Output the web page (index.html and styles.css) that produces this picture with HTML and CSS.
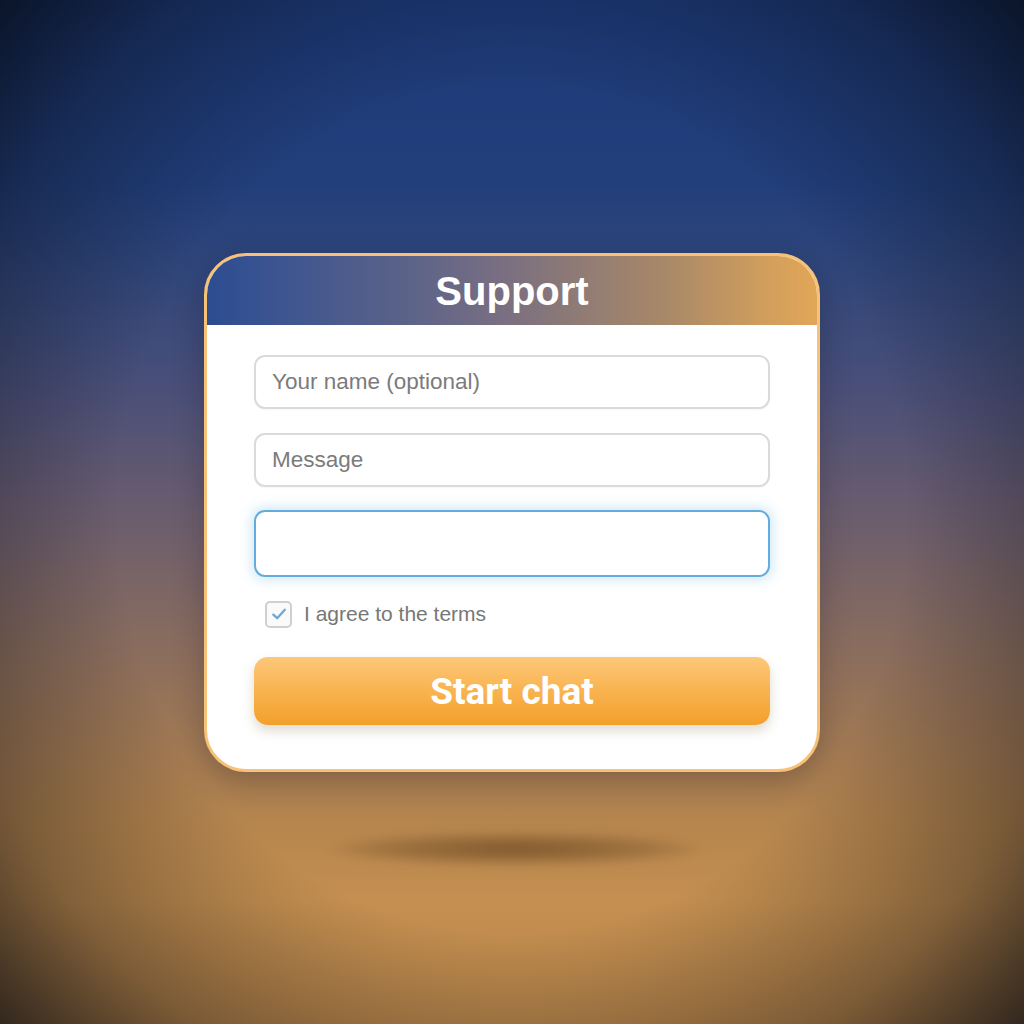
FILE: index.html
```html
<!DOCTYPE html>
<html lang="en">
<head>
<meta charset="utf-8">
<title>Support</title>
<link rel="stylesheet" href="styles.css">
</head>
<body>
<div class="scene">
  <div class="vignette"></div>
  <div class="floor-shadow"></div>
  <div class="card">
    <div class="card-header">
      <h1 class="title">Support</h1>
    </div>
    <form class="card-body">
      <input class="field" type="text" placeholder="Your name (optional)">
      <input class="field" type="text" placeholder="Message">
      <input class="field field-focus" type="text">
      <label class="agree">
        <span class="checkbox">
          <svg viewBox="0 0 20 20" width="20" height="20"><path d="M4.3 10.6 L8.2 14.2 L15.8 5.8" fill="none" stroke="#72a6d2" stroke-width="2.3" stroke-linecap="round" stroke-linejoin="round"/></svg>
        </span>
        <span class="agree-text">I agree to the terms</span>
      </label>
      <button class="start" type="button">Start chat</button>
    </form>
  </div>
</div>
</body>
</html>
```

FILE: styles.css
```css
html, body {
  margin: 0;
  padding: 0;
}
body {
  width: 1024px;
  height: 1024px;
  overflow: hidden;
  font-family: "Liberation Sans", Arial, sans-serif;
}
.scene {
  position: relative;
  width: 1024px;
  height: 1024px;
  box-sizing: border-box;
  padding-top: 253px;
  display: flex;
  flex-direction: column;
  align-items: center;
  background: linear-gradient(180deg,
    #1d3a78 0%,
    #223f7c 18%,
    #33477a 28%,
    #4a4f78 38%,
    #655a70 48%,
    #7d6664 58%,
    #9a7556 70%,
    #b5854e 80%,
    #c48f50 88%,
    #b8854a 100%);
}
.vignette {
  position: absolute;
  inset: 0;
  background: radial-gradient(ellipse 70% 75% at 50% 50%, rgba(0,0,0,0) 55%, rgba(5,8,15,0.35) 80%, rgba(5,8,15,0.8) 100%);
  pointer-events: none;
}
.floor-shadow {
  position: absolute;
  left: 330px;
  top: 832px;
  width: 370px;
  height: 34px;
  border-radius: 50%;
  background: radial-gradient(ellipse at center, rgba(80,50,20,0.55) 0%, rgba(80,50,20,0.25) 50%, rgba(80,50,20,0) 75%);
  filter: blur(4px);
}
.card {
  position: relative;
  width: 616px;
  box-sizing: border-box;
  border: 3px solid #f5c278;
  border-radius: 42px;
  background: #ffffff;
  overflow: hidden;
  box-shadow: 0 10px 30px rgba(20, 15, 30, 0.25);
}
.card-header {
  height: 69px;
  display: flex;
  align-items: center;
  justify-content: center;
  background: linear-gradient(90deg,
    #2c4c91 0%,
    #3d5590 12%,
    #5a6289 32%,
    #736c84 45%,
    #8a7878 58%,
    #a88868 75%,
    #d29f5c 92%,
    #e2a658 100%);
}
.title {
  margin: 0;
  padding-top: 2px;
  font-family: "Liberation Sans", Arial, sans-serif;
  font-weight: 700;
  font-size: 40px;
  color: #ffffff;
}
.card-body {
  margin: 0;
  padding: 30px 47px 44px;
  display: flex;
  flex-direction: column;
}
.field {
  height: 54px;
  box-sizing: border-box;
  border: 2px solid #dadada;
  border-radius: 11px;
  background: #fff;
  padding: 0 16px;
  font-family: "Liberation Sans", Arial, sans-serif;
  font-size: 22.5px;
  color: #555;
  margin-bottom: 24px;
  outline: none;
  box-shadow: 0 1px 2px rgba(0,0,0,0.04);
}
.field::placeholder {
  color: #7b7b7b;
}
.field-focus {
  height: 67px;
  margin-top: -1px;
  border-color: #62ade0;
  box-shadow: 0 0 12px 3px rgba(98, 173, 224, 0.28);
}
.agree {
  display: flex;
  align-items: center;
  gap: 12px;
  padding-left: 11px;
  height: 26px;
}
.checkbox {
  width: 27px;
  height: 27px;
  box-sizing: border-box;
  border: 2px solid #cfcfcf;
  border-radius: 5px;
  display: flex;
  align-items: center;
  justify-content: center;
  background: #fafafa;
}
.agree-text {
  font-size: 21px;
  color: #777;
}
.start {
  margin-top: 30px;
  height: 68px;
  border: none;
  border-radius: 14px;
  background: linear-gradient(180deg, #fdc87a 0%, #f9b553 45%, #f3a02b 100%);
  color: #ffffff;
  font-family: "Roboto", "Liberation Sans", sans-serif;
  font-weight: 700;
  font-size: 37px;
  box-shadow: 0 6px 12px rgba(120, 90, 40, 0.22);
}
```
